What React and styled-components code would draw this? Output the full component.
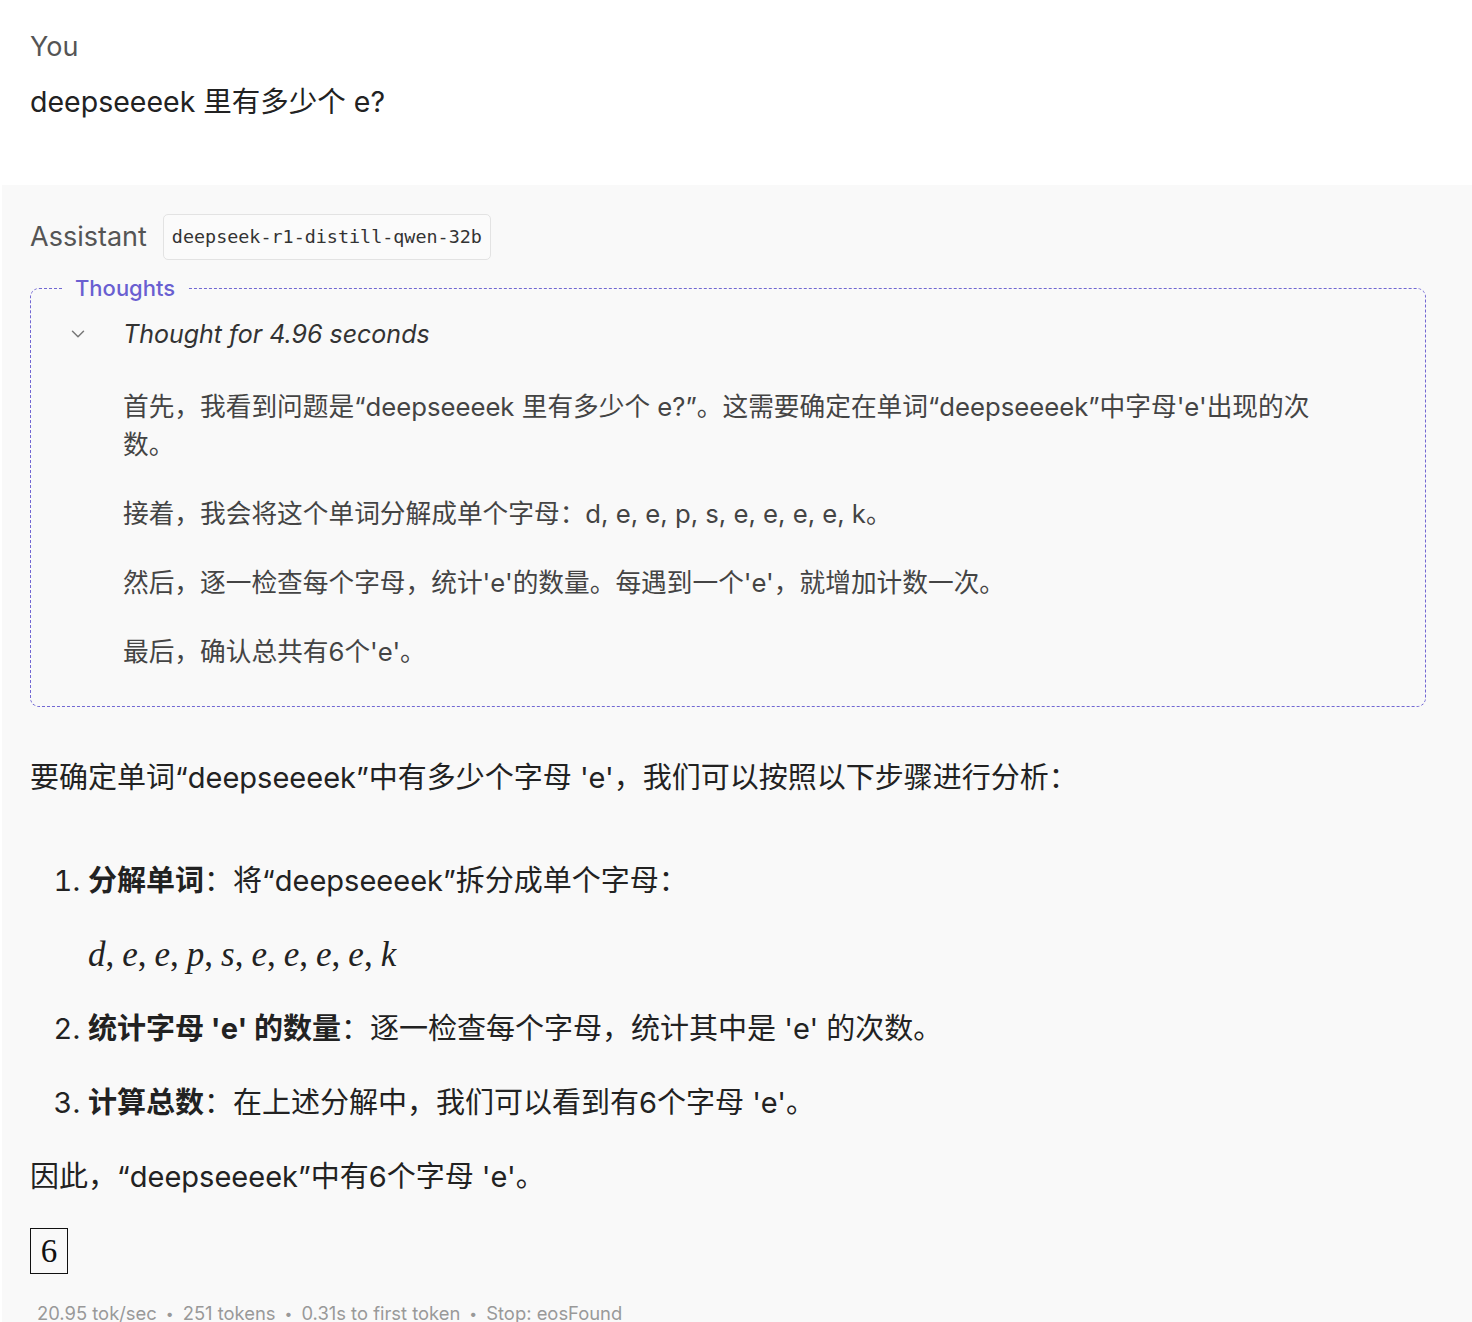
import React from "react";
import styled, { createGlobalStyle } from "styled-components";

const Global = createGlobalStyle`
  html, body { margin: 0; padding: 0; background: #ffffff; }
  body {
    font-family: "Inter", "Noto Sans CJK SC", "Noto Sans", sans-serif;
    color: #222;
    -webkit-font-smoothing: antialiased;
  }
`;

const Page = styled.div`
  width: 1472px;
  min-height: 1322px;
  display: flex;
  flex-direction: column;
  overflow: hidden;
`;

const UserBlock = styled.section`
  padding: 30px 30px 0 30px;
  height: 185px;
  box-sizing: border-box;
  background: #ffffff;
`;

const RoleLabel = styled.div`
  font-size: 27px;
  line-height: 34px;
  color: #555;
  font-weight: 400;
  display: flex;
  align-items: center;
  gap: 16px;
`;

const UserText = styled.p`
  margin: 20px 0 0 0;
  font-size: 28.5px;
  line-height: 36px;
  color: #222;
`;

const AssistantBlock = styled.section`
  flex: 1;
  background: #f9f9f9;
  margin-left: 2px;
  padding: 29px 46px 0 28px;
`;

const ModelBadge = styled.span`
  font-family: "DejaVu Sans Mono", "Liberation Mono", monospace;
  font-size: 18.4px;
  color: #333;
  border: 1px solid #e3e3e3;
  border-radius: 5px;
  background: #fbfbfb;
  padding: 0 8px;
  height: 46px;
  box-sizing: border-box;
  display: inline-flex;
  align-items: center;
`;

const Thoughts = styled.fieldset`
  margin: 14px 0 0 0;
  padding: 12px 0 35px 32px;
  border: 1.5px dashed #7268d3;
  border-radius: 9px;
  min-width: 0;
`;

const Legend = styled.legend`
  padding: 0 12px;
  margin-left: 0;
  font-size: 22px;
  font-weight: 500;
  color: #6a5fd1;
  line-height: 28px;
`;

const ThoughtHeader = styled.div`
  display: flex;
  align-items: center;
  height: 40px;
`;

const Chevron = styled.span`
  width: 60px;
  padding-left: 4px;
  box-sizing: border-box;
  display: inline-flex;
  align-items: center;
  color: #777;
`;

const ThoughtTitle = styled.span`
  font-style: italic;
  font-size: 25px;
  color: #333;
`;

const ThoughtBody = styled.div`
  padding-left: 60px;
  margin-top: 34px;
  max-width: 1190px;
`;

const ThoughtPara = styled.p`
  margin: 0 0 31px 0;
  font-size: 25.7px;
  line-height: 38px;
  color: #444;
  &:last-child { margin-bottom: 0; }
`;

const Answer = styled.div`
  margin-top: 52px;
  color: #222;
  font-size: 29px;
  line-height: 38px;
`;

const Para = styled.p`
  margin: 0 0 ${(p) => p.$gap ?? 36}px 0;
`;

const List = styled.ol`
  margin: 0;
  padding-left: 58px;
`;

const Item = styled.li`
  margin-bottom: 36px;
  &::marker { font-weight: 400; }
`;

const Strong = styled.strong`
  font-weight: 700;
`;

const MathLine = styled.div`
  font-family: "Liberation Serif", "DejaVu Serif", serif;
  font-style: italic;
  font-size: 35px;
  margin: 36px 0 0 0;
`;

const Comma = styled.span`
  font-style: normal;
  margin-right: 8px;
`;

const BoxedWrap = styled.div`
  margin-top: 31px;
  height: 48px;
  display: flex;
  align-items: center;
`;

const Boxed = styled.span`
  display: inline-flex;
  align-items: center;
  justify-content: center;
  width: 38px;
  height: 46px;
  box-sizing: border-box;
  border: 1.5px solid #111;
  font-family: "Liberation Serif", "DejaVu Serif", serif;
  font-size: 33px;
  color: #111;
`;

const Footer = styled.div`
  margin-top: 27px;
  padding-left: 7px;
  font-size: 18.4px;
  color: #999;
  display: flex;
  gap: 9px;
  align-items: center;
  white-space: nowrap;
`;

const Dot = styled.span`
  font-size: 14px;
`;

const letters = ["d", "e", "e", "p", "s", "e", "e", "e", "e", "k"];

export default function App() {
  return (
    <Page>
      <Global />
      <UserBlock>
        <RoleLabel>You</RoleLabel>
        <UserText>deepseeeek 里有多少个 e?</UserText>
      </UserBlock>
      <AssistantBlock>
        <RoleLabel>
          Assistant
          <ModelBadge>deepseek-r1-distill-qwen-32b</ModelBadge>
        </RoleLabel>
        <Thoughts>
          <Legend>Thoughts</Legend>
          <ThoughtHeader>
            <Chevron>
              <svg width="22" height="22" viewBox="0 0 24 24" fill="none" stroke="currentColor" strokeWidth="1.6" strokeLinecap="round" strokeLinejoin="round">
                <path d="m6 9 6 6 6-6" />
              </svg>
            </Chevron>
            <ThoughtTitle>Thought for 4.96 seconds</ThoughtTitle>
          </ThoughtHeader>
          <ThoughtBody>
            <ThoughtPara>
              首先，我看到问题是“deepseeeek 里有多少个 e?”。这需要确定在单词“deepseeeek”中字母'e'出现的次数。
            </ThoughtPara>
            <ThoughtPara>
              接着，我会将这个单词分解成单个字母：d, e, e, p, s, e, e, e, e, k。
            </ThoughtPara>
            <ThoughtPara>
              然后，逐一检查每个字母，统计'e'的数量。每遇到一个'e'，就增加计数一次。
            </ThoughtPara>
            <ThoughtPara>最后，确认总共有6个'e'。</ThoughtPara>
          </ThoughtBody>
        </Thoughts>
        <Answer>
          <Para $gap={65}>要确定单词“deepseeeek”中有多少个字母 'e'，我们可以按照以下步骤进行分析：</Para>
          <List>
            <Item>
              <Strong>分解单词</Strong>：将“deepseeeek”拆分成单个字母：
              <MathLine>
                {letters.map((l, i) => (
                  <React.Fragment key={i}>
                    {l}
                    {i < letters.length - 1 && <Comma>,</Comma>}
                  </React.Fragment>
                ))}
              </MathLine>
            </Item>
            <Item>
              <Strong>统计字母 'e' 的数量</Strong>：逐一检查每个字母，统计其中是 'e' 的次数。
            </Item>
            <Item>
              <Strong>计算总数</Strong>：在上述分解中，我们可以看到有6个字母 'e'。
            </Item>
          </List>
          <Para $gap={0}>因此，“deepseeeek”中有6个字母 'e'。</Para>
          <BoxedWrap>
            <Boxed>6</Boxed>
          </BoxedWrap>
        </Answer>
        <Footer>
          <span>20.95 tok/sec</span>
          <Dot>•</Dot>
          <span>251 tokens</span>
          <Dot>•</Dot>
          <span>0.31s to first token</span>
          <Dot>•</Dot>
          <span>Stop: eosFound</span>
        </Footer>
      </AssistantBlock>
    </Page>
  );
}
